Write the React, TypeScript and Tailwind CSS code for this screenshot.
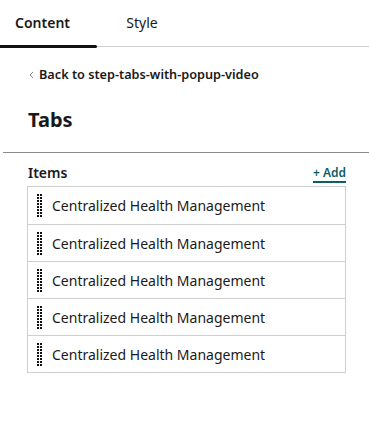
import React from 'react';

const items = Array.from({ length: 5 }, () => 'Centralized Health Management');

const Grip: React.FC = () => (
    <svg width="5" height="23" viewBox="0 0 5 23" className="shrink-0">
        {Array.from({ length: 8 }).map((_, i) => (
            <React.Fragment key={i}>
                <rect x="0" y={i * 3} width="2" height="2" fill="#111" />
                <rect x="3" y={i * 3} width="2" height="2" fill="#111" />
            </React.Fragment>
        ))}
    </svg>
);

export default function App() {
    return (
        <div className="w-[369px] h-[423px] bg-white text-[#1a1a1a]" style={{ fontFamily: '"Noto Sans", sans-serif' }}>
            {/* Tabs */}
            <div className="relative flex h-[47px] border-b border-[#cfcfcf]">
                <div className="relative w-[97px] flex pl-[15px] pt-[12px]">
                    <span className="text-[14px] font-semibold">Content</span>
                    <div className="absolute left-0 right-0 bottom-[-2px] h-[3px] bg-[#111] rounded-r-full" />
                </div>
                <div className="w-[90px] flex justify-center pt-[12px]">
                    <span className="text-[14px]">Style</span>
                </div>
            </div>

            {/* Back link */}
            <div className="flex items-center gap-[5px] pl-[29px] pt-[18px]">
                <svg width="5" height="8" viewBox="0 0 5 8" className="shrink-0">
                    <path d="M4 1 L1 4 L4 7" fill="none" stroke="#888" strokeWidth="1" />
                </svg>
                <span className="text-[12.7px] font-semibold">Back to step-tabs-with-popup-video</span>
            </div>

            <h1 className="pl-[28px] pt-[26px] text-[20px] font-bold leading-none">Tabs</h1>

            <div className="ml-[3px] mt-[22px] border-t border-[#8a8a8a]" />

            {/* Items */}
            <div className="pl-[27px] pr-[23px] pt-[9px]">
                <div className="flex items-end justify-between">
                    <span className="text-[14px] font-semibold pl-[1px]">Items</span>
                    <span className="text-[12px] font-semibold text-[#0e5d63] border-b-2 border-[#0e5d63] leading-[16px]">+ Add</span>
                </div>
                <div className="mt-[3px] border border-[#cfcfcf]">
                    {items.map((t, i) => (
                        <div key={i} className={`flex items-center gap-[10px] h-[37px] pl-[9px] ${i > 0 ? 'border-t border-[#cfcfcf]' : ''}`}>
                            <Grip />
                            <span className="text-[14px]">{t}</span>
                        </div>
                    ))}
                </div>
            </div>
        </div>
    );
}
